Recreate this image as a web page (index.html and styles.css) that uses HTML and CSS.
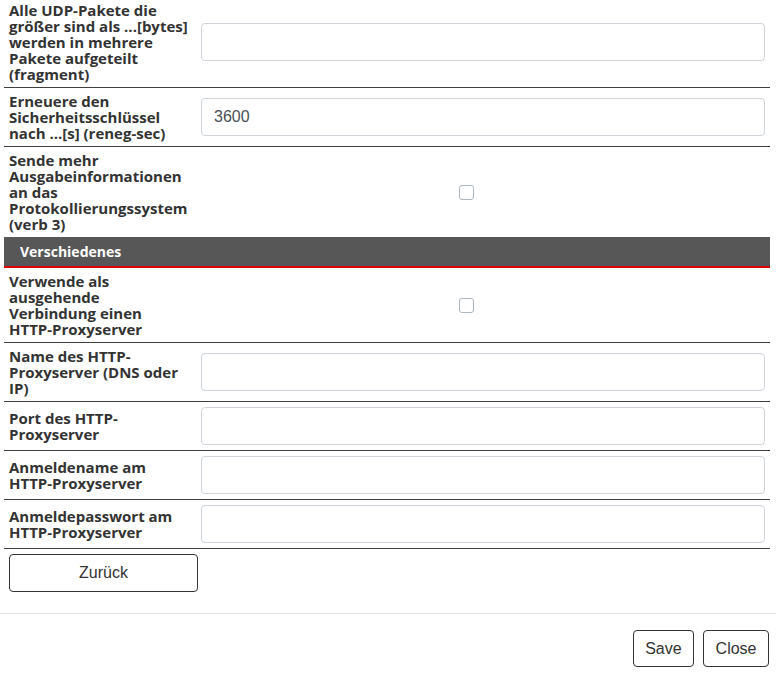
FILE: index.html
```html
<!DOCTYPE html>
<html lang="de">
<head>
<meta charset="utf-8">
<title>HTTP-Proxy</title>
<link rel="stylesheet" href="styles.css">
</head>
<body>
<div class="modal-body">
  <div class="row row-first">
    <div class="label">Alle UDP-Pakete die größer sind als ...[bytes] werden in mehrere Pakete aufgeteilt (fragment)</div>
    <div class="value"><input class="field" type="text" value=""></div>
  </div>
  <div class="row">
    <div class="label">Erneuere den Sicherheitsschlüssel nach ...[s] (reneg-sec)</div>
    <div class="value"><input class="field" type="text" value="3600"></div>
  </div>
  <div class="row row-noline">
    <div class="label">Sende mehr Ausgabeinformationen an das Protokollierungssystem (verb 3)</div>
    <div class="value"><input class="check" type="checkbox"></div>
  </div>
  <div class="section">Verschiedenes</div>
  <div class="row">
    <div class="label">Verwende als ausgehende Verbindung einen HTTP-Proxyserver</div>
    <div class="value"><input class="check" type="checkbox"></div>
  </div>
  <div class="row">
    <div class="label">Name des HTTP-Proxyserver (DNS oder IP)</div>
    <div class="value"><input class="field" type="text" value=""></div>
  </div>
  <div class="row">
    <div class="label">Port des HTTP-Proxyserver</div>
    <div class="value"><input class="field" type="text" value=""></div>
  </div>
  <div class="row">
    <div class="label">Anmeldename am HTTP-Proxyserver</div>
    <div class="value"><input class="field" type="text" value=""></div>
  </div>
  <div class="row">
    <div class="label">Anmeldepasswort am HTTP-Proxyserver</div>
    <div class="value"><input class="field" type="password" value=""></div>
  </div>
  <div class="back-wrap">
    <button class="btn btn-back" type="button">Zurück</button>
  </div>
</div>
<div class="modal-footer">
  <button class="btn" type="button">Save</button>
  <button class="btn" type="button">Close</button>
</div>
</body>
</html>
```
FILE: styles.css
```css
html, body {
  margin: 0;
  padding: 0;
  background: #fff;
  overflow: hidden;
}

body {
  font-family: "Open Sans", "Liberation Sans", sans-serif;
  color: #333;
}

.modal-body {
  padding: 0 6px 0 4px;
}

.row {
  display: grid;
  grid-template-columns: 192px 1fr;
  align-items: center;
  border-bottom: 1px solid #3f3f3f;
}

.row-first {
  margin-top: -3px;
}

.row-noline {
  border-bottom: none;
}

.label {
  padding: 5px 8px 5px 5px;
  font-size: 15px;
  font-weight: 700;
  line-height: 16px;
  color: #333;
}

.value {
  padding: 5px 5px;
  display: flex;
  align-items: center;
}

.field {
  box-sizing: border-box;
  width: 100%;
  height: 38px;
  margin: 0;
  padding: 0 12px;
  border: 1px solid #ced4da;
  border-radius: 4px;
  font-family: "Liberation Sans", Arial, sans-serif;
  font-size: 16px;
  color: #495057;
  background: #fff;
  outline: none;
}

.check {
  appearance: none;
  -webkit-appearance: none;
  box-sizing: border-box;
  width: 15px;
  height: 15px;
  margin: 0 0 0 258px;
  border: 1px solid #adb5bd;
  border-radius: 3px;
  background: #fff;
}

.section {
  height: 29px;
  line-height: 29px;
  padding: 0 16px;
  background: #575757;
  border-bottom: 2px solid #e00000;
  color: #fff;
  font-size: 14px;
  font-weight: 700;
}

.back-wrap {
  padding: 5px 0 21px 5px;
}

.btn {
  box-sizing: border-box;
  height: 37px;
  padding: 0 11.5px;
  border: 1px solid #333;
  border-radius: 4px;
  background: #fff;
  font-family: "Liberation Sans", Arial, sans-serif;
  font-size: 16px;
  color: #333;
}

.btn-back {
  width: 189px;
  height: 38px;
}

.modal-footer {
  border-top: 1px solid #dee2e6;
  padding: 16px 7px 16px 0;
  display: flex;
  justify-content: flex-end;
  gap: 9px;
}
```
